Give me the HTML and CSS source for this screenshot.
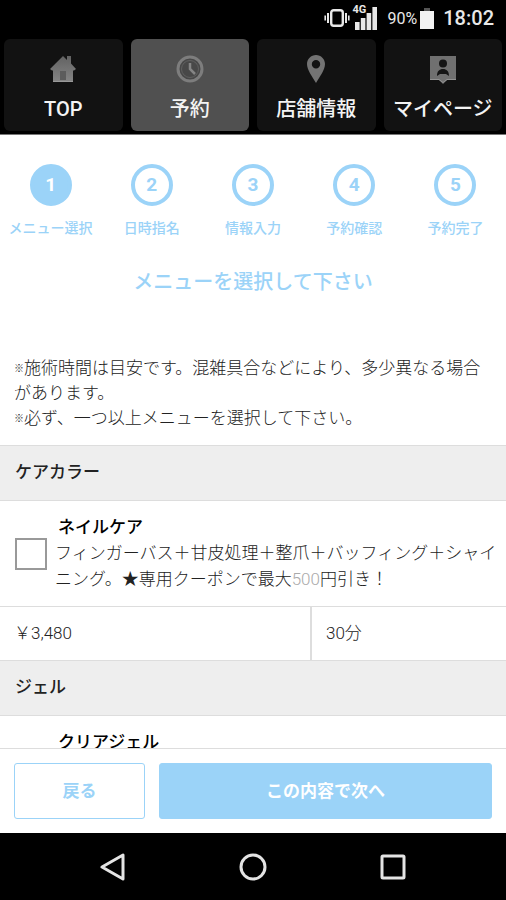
FILE: index.html
```html
<!DOCTYPE html>
<html lang="ja">
<head>
<meta charset="utf-8">
<meta name="viewport" content="width=device-width, initial-scale=1">
<title>予約</title>
<link rel="stylesheet" href="styles.css">
</head>
<body>
<div class="status">
  <svg width="26" height="20" viewBox="0 0 26 20" fill="none" stroke="#e8e8e8"><rect x="7.2" y="2.2" width="11.6" height="15.6" rx="2.5" stroke-width="2.4"/><path d="M4 5v10M22 5v10" stroke-width="2"/><path d="M1.2 7.5v5M24.8 7.5v5" stroke-width="1.6"/></svg>
  <span class="signal">
    <span class="network">4G</span>
    <svg width="24" height="23" viewBox="0 0 24 23" fill="#e8e8e8"><path d="M2 15h4.6v8H2zM7.8 11h4.6v12H7.8zM13.6 6h4.6v17h-4.6zM19.4 0H24v23h-4.6z"/></svg>
  </span>
  <span class="battery-text">90%</span>
  <svg class="battery" width="14" height="21" viewBox="0 0 14 21"><path fill="#555" d="M4 0h6v3H4z"/><path fill="#f2f2f2" d="M0 3h14v18H0z"/></svg>
  <span class="clock">18:02</span>
</div>
<nav class="tabs">
  <a class="tab" href="#">
    <svg class="tab-icon" viewBox="0 0 28 28"><defs><linearGradient id="metal" x1="0" y1="0" x2="0" y2="1"><stop offset="0" stop-color="#626262"/><stop offset="1" stop-color="#858585"/></linearGradient></defs><path fill="url(#metal)" d="M1 14 14 1l4 4V1h4v7.500L27 14l-2 1.500h-1V27H4V15.500H3z"/><path fill="#5c5c5c" d="M11 16h6v9h-6z"/><path stroke="#999" d="M4 26.500h20"/></svg>
    <span>TOP</span>
  </a>
  <a class="tab tab-active" href="#">
    <svg class="tab-icon" viewBox="0 0 28 28" fill="none"><circle cx="14" cy="14" r="12" fill="#484848" stroke="#7d7d7d" stroke-width="3"/><circle cx="14" cy="14" r="8.500" stroke="#606060"/><path d="M14 8v6l5 5" stroke="#858585" stroke-width="2.500"/></svg>
    <span>予約</span>
  </a>
  <a class="tab" href="#">
    <svg class="tab-icon" viewBox="0 0 28 28"><path fill="#737373" fill-rule="evenodd" d="M14 0c-5 0-9 4-9 9 0 6 5 12 9 19 4-7 9-13 9-19 0-5-4-9-9-9zm0 5a4.200 4.200 0 1 1 0 8.400A4.200 4.200 0 0 1 14 5z"/></svg>
    <span>店舗情報</span>
  </a>
  <a class="tab" href="#">
    <svg class="tab-icon" viewBox="0 0 28 28"><path fill="#707070" d="M1 1h26v24H18l-4 4-4-4H1z"/><path stroke="#929292" fill="none" d="M1 24.500h9l4 3 4-3h9"/><circle cx="14" cy="8.500" r="4" fill="#151515"/><path fill="#151515" d="M8 21c0-5 2.500-7 6-7s6 2 6 7l-3-2h-6z"/></svg>
    <span>マイページ</span>
  </a>
</nav>
<main class="content">
  <ol class="steps">
    <li class="step step-current"><span class="step-number">1</span><span>メニュー選択</span></li>
    <li class="step"><span class="step-number">2</span><span>日時指名</span></li>
    <li class="step"><span class="step-number">3</span><span>情報入力</span></li>
    <li class="step"><span class="step-number">4</span><span>予約確認</span></li>
    <li class="step"><span class="step-number">5</span><span>予約完了</span></li>
  </ol>
  <h1 class="title">メニューを選択して下さい</h1>
  <div class="notes">
    <p><span class="mark">※</span>施術時間は目安です。混雑具合などにより、多少異なる場合があります。</p>
    <p><span class="mark">※</span>必ず、一つ以上メニューを選択して下さい。</p>
  </div>
  <h2 class="category">ケアカラー</h2>
  <div class="item">
    <input class="check" type="checkbox" id="nail-care">
    <label class="item-label" for="nail-care">
      <span class="item-name">ネイルケア</span>
      <span class="item-text">フィンガーバス＋甘皮処理＋整爪＋バッフィング＋シャイニング。★専用クーポンで最大<span class="amount">500</span>円引き！</span>
    </label>
  </div>
  <div class="facts">
    <span class="price">￥3,480</span>
    <span class="duration">30分</span>
  </div>
  <h2 class="category">ジェル</h2>
  <div class="item">
    <input class="check" type="checkbox" id="clear-gel">
    <label class="item-label" for="clear-gel">
      <span class="item-name">クリアジェル</span>
    </label>
  </div>
</main>
<footer class="actions">
  <button class="button back" type="button">戻る</button>
  <button class="button next" type="button">この内容で次へ</button>
</footer>
<div class="system">
  <svg viewBox="0 0 28 28"><path d="M24 2v24L3 14z"/></svg>
  <svg viewBox="0 0 28 28"><circle cx="14" cy="14" r="12"/></svg>
  <svg viewBox="0 0 28 28"><rect x="3" y="3" width="22" height="22" rx="1"/></svg>
</div>
</body>
</html>
```
FILE: styles.css
```css
* { box-sizing: border-box; }
body {
  margin: 0;
  height: 100vh;
  display: flex;
  flex-direction: column;
  font-family: Roboto, "Noto Sans CJK JP", sans-serif;
  font-size: 17px;
  line-height: 25px;
  color: #222;
  background: #fff;
}
h1, h2, p, ol { margin: 0; padding: 0; }

.status {
  display: flex;
  align-items: center;
  justify-content: flex-end;
  gap: 3px;
  height: 39px;
  padding: 0 12px 3px;
  background: #000;
  color: #e8e8e8;
}
.signal { position: relative; display: flex; margin-right: 8px; }
.network {
  position: absolute;
  top: -3px;
  left: 0;
  font-size: 11px;
  line-height: 12px;
  font-weight: 700;
  background: #000;
}
.battery-text { font-size: 16px; }
.battery { margin-right: 6px; }
.clock { font-size: 20px; font-weight: 500; }

.tabs {
  display: grid;
  grid-template-columns: repeat(4, 1fr);
  gap: 8px;
  padding: 0 4px 3px;
  background: #000;
  border-bottom: 1px solid #777;
}
.tab {
  display: flex;
  flex-direction: column;
  align-items: center;
  gap: 12px;
  height: 92px;
  padding-top: 16px;
  border-radius: 6px;
  background: #121212;
  color: #f4f4f4;
  font-size: 20px;
  font-weight: 500;
  line-height: 28px;
  text-decoration: none;
  white-space: nowrap;
}
.tab-active { background: #505050; }
.tab-icon { width: 28px; height: 28px; overflow: visible; }

.content { flex: 1; min-height: 0; overflow: hidden; }
.steps {
  display: grid;
  grid-template-columns: repeat(5, 1fr);
  padding-top: 29px;
  list-style: none;
  color: #9bd3f8;
  font-size: 14px;
  font-weight: 500;
}
.step {
  display: flex;
  flex-direction: column;
  align-items: center;
  gap: 10px;
  white-space: nowrap;
}
.step-number {
  display: grid;
  place-items: center;
  width: 42px;
  height: 42px;
  padding-bottom: 2px;
  border: 4px solid #9bd3f8;
  border-radius: 50%;
  font-size: 19px;
  font-weight: 700;
}
.step-current .step-number { background: #9bd3f8; color: #fff; }
.title {
  padding: 27px 14px 60px;
  text-align: center;
  color: #9bd3f8;
  font-size: 20px;
  font-weight: 500;
  line-height: 28px;
}
.notes { padding: 0 14px; margin-bottom: 14px; font-weight: 300; }
.mark { font-size: 10px; font-weight: 500; line-height: 1; vertical-align: 2px; }
.category {
  padding: 14px 15px 15px;
  border-top: 1px solid #ddd;
  border-bottom: 1px solid #ddd;
  background: #eee;
  font-size: 17px;
  font-weight: 500;
}
.item {
  display: flex;
  align-items: center;
  gap: 8px;
  min-height: 105px;
  padding: 14px 8px 14px 15px;
}
.check {
  appearance: none;
  flex: none;
  width: 32px;
  height: 32px;
  margin: 0;
  border: 2px solid #999;
  background: #fff;
}
.check:checked { background: #9bd3f8; }
.item-label { flex: 1; align-self: flex-start; line-height: 26px; }
.item-name { display: block; padding-left: 3px; font-weight: 500; line-height: 25px; color: #000; }
.item-text { font-weight: 300; }
.amount { color: #aaa; }
.facts {
  display: grid;
  grid-template-columns: 310fr 196fr;
  border-top: 1px solid #ddd;
}
.price, .duration { padding: 14px; font-weight: 300; }
.duration { border-left: 2px solid #ddd; }

.actions {
  display: flex;
  gap: 14px;
  padding: 14px;
  border-top: 1px solid #ddd;
  background: #fff;
}
.button {
  height: 56px;
  padding: 0;
  border: 1px solid #9bd3f8;
  border-radius: 3px;
  font: inherit;
  font-weight: 700;
}
.back { flex: 28; background: #fff; color: #9bd3f8; }
.next { flex: 72; background: #9bd3f8; color: #fff; }

.system {
  display: flex;
  justify-content: center;
  align-items: center;
  gap: 112px;
  height: 67px;
  background: #000;
}
.system svg {
  width: 28px;
  height: 28px;
  fill: none;
  stroke: #e4e4e4;
  stroke-width: 3;
  stroke-linejoin: round;
}
```
